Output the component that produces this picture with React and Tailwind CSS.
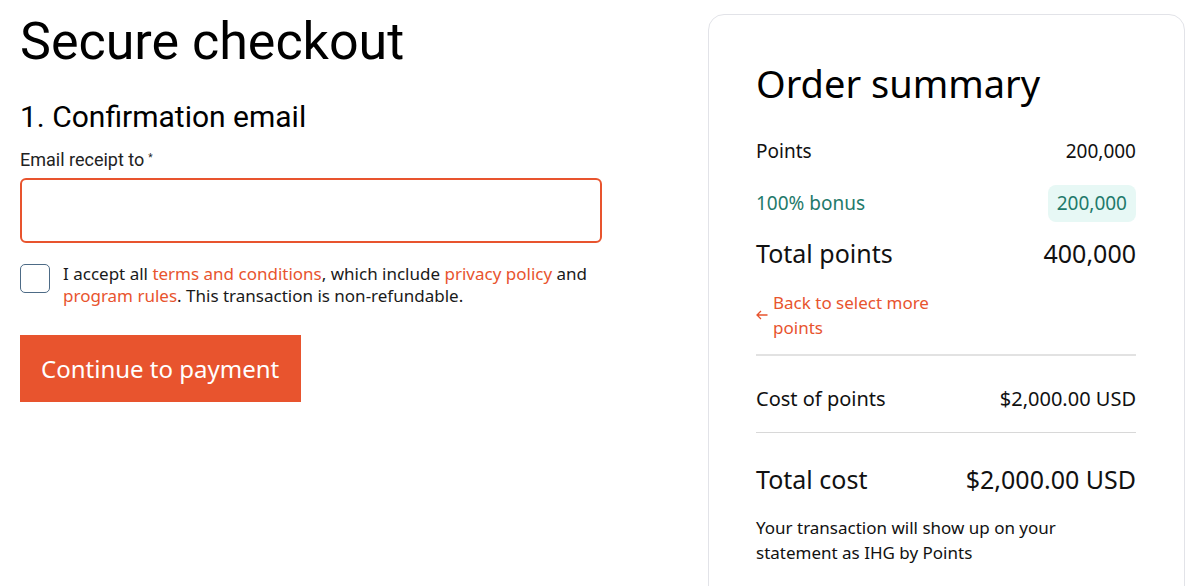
export default function App() {
  const body = { fontFamily: '"Noto Sans", "Open Sans", sans-serif' };
  const head = { fontFamily: 'Roboto, "Liberation Sans", sans-serif' };
  return (
    <div className="w-[1200px] h-[586px] overflow-hidden bg-white flex text-[#111]" style={body}>
      <div className="w-[708px] pl-5 pt-[14px] flex flex-col">
        <h1 className="text-[52px] leading-[56px] text-black" style={head}>Secure checkout</h1>
        <h2 className="mt-[30px] text-[30px] leading-[34px] text-black" style={head}>1. Confirmation email</h2>
        <label className="mt-[16px] text-[18px] leading-[20px] text-[#222]" style={head}>
          Email receipt to<sup className="ml-[4px] text-[10px]">*</sup>
        </label>
        <input
          className="mt-[8px] w-[582px] h-[65px] rounded-[6px] border-2 border-[#e8542e] outline-none px-4"
          type="email"
        />
        <div className="mt-[21px] flex items-start gap-[13px]">
          <div className="w-[30px] h-[29px] shrink-0 rounded-[5px] border border-[#4d6b86]"></div>
          <p className="text-[17px] leading-[22px] text-[#1a1a1a] w-[560px] -mt-[1px]">
            I accept all <span className="text-[#e8542e]">terms and conditions</span>, which include{" "}
            <span className="text-[#e8542e]">privacy policy</span> and{" "}
            <span className="text-[#e8542e]">program rules</span>. This transaction is non-refundable.
          </p>
        </div>
        <button className="mt-[28px] w-[281px] h-[67px] bg-[#e8542e] text-white text-[24px] text-left pl-[21px]">
          Continue to payment
        </button>
      </div>
      <div className="mt-[14px] w-[477px] h-[600px] rounded-[16px] border border-[#e2e3e8] pl-[47px] pr-[48px] pt-[46px] flex flex-col">
        <h2 className="text-[38px] leading-[44px] text-black">Order summary</h2>
        <div className="mt-[34px] flex justify-between items-center text-[19px] leading-[24px]">
          <span>Points</span>
          <span>200,000</span>
        </div>
        <div className="mt-[22px] flex justify-between items-center text-[19px] leading-[25px] text-[#1f7a6b]">
          <span>100% bonus</span>
          <span className="bg-[#e7f8f5] rounded-[8px] px-[9px] py-[6px]">200,000</span>
        </div>
        <div className="mt-[16px] flex justify-between items-center text-[25px] leading-[30px]">
          <span>Total points</span>
          <span>400,000</span>
        </div>
        <div className="mt-[22px] flex items-center gap-[5px] text-[#e8542e] text-[17px] leading-[25px]">
          <svg width="12" height="10" viewBox="0 0 12 10" fill="none" stroke="#e8542e" strokeWidth="1.3">
            <path d="M11.5 5H1M5 1L1 5l4 4" />
          </svg>
          <span className="w-[180px]">Back to select more points</span>
        </div>
        <div className="mt-[14px] h-[2px] bg-[#e2e2e2]"></div>
        <div className="pt-[31px] pb-[21px] flex justify-between items-center text-[20px] leading-[24px]">
          <span>Cost of points</span>
          <span>$2,000.00 USD</span>
        </div>
        <div className="h-[1px] bg-[#d8d8d8]"></div>
        <div className="mt-[31px] flex justify-between items-center text-[25px] leading-[30px]">
          <span>Total cost</span>
          <span>$2,000.00 USD</span>
        </div>
        <p className="mt-[21px] text-[17px] leading-[25px] w-[320px]">
          Your transaction will show up on your statement as IHG by Points
        </p>
      </div>
    </div>
  );
}
